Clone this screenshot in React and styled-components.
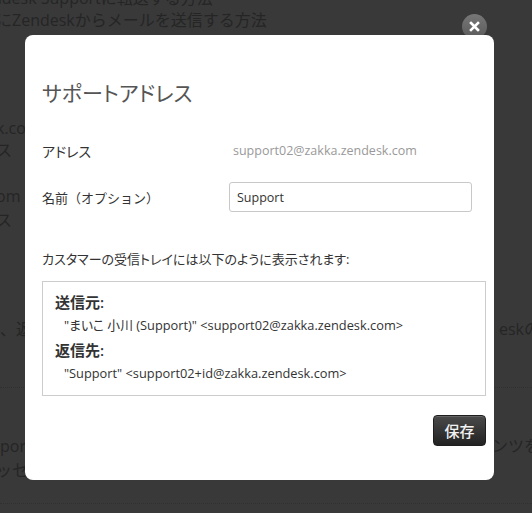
import React from 'react';
import styled, { createGlobalStyle } from 'styled-components';

const GlobalStyle = createGlobalStyle`
  html, body {
    margin: 0;
    padding: 0;
    background: #393939;
    overflow: hidden;
  }
  body {
    font-family: "Open Sans", "Noto Sans CJK JP", sans-serif;
  }
`;

export default function App() {
  return (
    <>
      <GlobalStyle />
      <Page>
        <BgLine $indent={-8} $top={-12}>ndesk Supportに転送する方法</BgLine>
        <BgLine $indent={-4} $top={2}>にZendeskからメールを送信する方法</BgLine>
        <BgSide $top={88}>k.co</BgSide>
        <BgSide $top={2}>ス</BgSide>
        <BgSide $top={26}>om</BgSide>
        <BgSide $top={4}>ス</BgSide>
        <BgSplit $top={89}>
          <span>、返</span>
          <span>eskの</span>
        </BgSplit>
        <Dotted $top={48} />
        <BgSplit $top={48}>
          <span>port</span>
          <span>ンツを</span>
        </BgSplit>
        <BgSide $top={4}>ッセー</BgSide>
        <Dotted $top={23} />
      </Page>

      <Overlay>
        <Dialog>
          <CloseButton aria-label="close">
            <svg width="11" height="11" viewBox="0 0 11 11">
              <path d="M2 2 L9 9 M9 2 L2 9" stroke="#fff" strokeWidth="2.6" strokeLinecap="square" />
            </svg>
          </CloseButton>
          <Title>サポートアドレス</Title>
          <Form>
            <Label $palt>アドレス</Label>
            <Value>support02@zakka.zendesk.com</Value>
            <Label>名前（オプション）</Label>
            <Input defaultValue="Support" />
          </Form>
          <Hint>カスタマーの受信トレイには以下のように表示されます:</Hint>
          <Preview>
            <PreviewHead>送信元:</PreviewHead>
            <PreviewLine>"まいこ 小川 (Support)" &lt;support02@zakka.zendesk.com&gt;</PreviewLine>
            <PreviewHead>返信先:</PreviewHead>
            <PreviewLine>"Support" &lt;support02+id@zakka.zendesk.com&gt;</PreviewLine>
          </Preview>
          <Footer>
            <SaveButton>保存</SaveButton>
          </Footer>
        </Dialog>
      </Overlay>
    </>
  );
}

const Page = styled.div`
  display: flex;
  flex-direction: column;
  width: 532px;
  height: 513px;
  color: #252525;
  font-size: 16px;
  line-height: 20px;
`;

const BgLine = styled.div`
  margin-top: ${p => p.$top}px;
  margin-left: ${p => p.$indent}px;
  white-space: nowrap;
`;

const BgSide = styled.div`
  margin-top: ${p => p.$top}px;
  margin-left: -4px;
  white-space: nowrap;
`;

const BgSplit = styled.div`
  display: flex;
  justify-content: space-between;
  margin-top: ${p => p.$top}px;
  margin-right: -8px;
  white-space: nowrap;
`;

const Dotted = styled.div`
  margin-top: ${p => p.$top}px;
  border-top: 1px dotted #303030;
`;

const Overlay = styled.div`
  position: fixed;
  inset: 0;
`;

const Dialog = styled.div`
  position: absolute;
  left: 25px;
  top: 35px;
  width: 469px;
  height: 445px;
  box-sizing: border-box;
  padding: 43px 8px 0 17px;
  background: #fff;
  border-radius: 8px;
  font-family: "Open Sans", "Noto Sans CJK JP", sans-serif;
`;

const CloseButton = styled.button`
  position: absolute;
  right: 7px;
  top: -21px;
  width: 25px;
  height: 25px;
  padding: 0;
  border: none;
  border-radius: 50%;
  background: linear-gradient(#777, #5a5a5a);
  display: flex;
  align-items: flex-start;
  justify-content: center;
  padding-top: 7px;
  box-sizing: border-box;
  z-index: -1;
`;

const Title = styled.h1`
  margin: 0;
  font-size: 21px;
  line-height: 30px;
  font-weight: 400;
  color: #555;
  font-feature-settings: "palt";
`;

const Form = styled.div`
  display: grid;
  grid-template-columns: 187px 243px;
  grid-auto-rows: 30px;
  row-gap: 16px;
  align-items: center;
  margin-top: 28px;
`;

const Label = styled.div`
  font-size: ${p => (p.$palt ? 14 : 13)}px;
  font-feature-settings: ${p => (p.$palt ? '"palt"' : 'normal')};
  color: #333;
`;

const Value = styled.div`
  font-size: 12.5px;
  color: #999;
  margin-left: 4px;
  margin-top: -2px;
`;

const Input = styled.input`
  height: 30px;
  box-sizing: border-box;
  border: 1px solid #c8c8c8;
  border-radius: 3px;
  padding: 0 7px;
  font-family: "Open Sans", "Noto Sans CJK JP", sans-serif;
  font-size: 12.5px;
  color: #333;
  outline: none;
`;

const Hint = styled.div`
  margin-top: 38px;
  font-size: 13px;
  line-height: 18px;
  color: #333;
  font-feature-settings: "palt";
`;

const Preview = styled.div`
  margin-top: 13px;
  width: 444px;
  box-sizing: border-box;
  border: 1px solid #ccc;
  padding: 9px 12px 8px 12px;
  display: flex;
  flex-direction: column;
`;

const PreviewHead = styled.div`
  font-size: 15px;
  line-height: 22px;
  font-weight: 600;
  color: #333;
  font-feature-settings: "palt";
`;

const PreviewLine = styled.div`
  font-size: 12.8px;
  line-height: 24px;
  color: #333;
  padding-left: 9px;
  margin-bottom: 2px;
  font-feature-settings: "palt";
`;

const Footer = styled.div`
  display: flex;
  justify-content: flex-end;
  width: 444px;
  margin-top: 19px;
`;

const SaveButton = styled.button`
  width: 53px;
  height: 31px;
  border: 1px solid #1e1e1e;
  border-radius: 4px;
  background: linear-gradient(#4a4a4a, #222);
  color: #f2f2f2;
  font-family: "Noto Sans CJK JP", sans-serif;
  font-size: 15px;
  font-weight: 500;
  padding: 0;
  box-shadow: inset 0 1px 0 rgba(255, 255, 255, 0.15);
`;
